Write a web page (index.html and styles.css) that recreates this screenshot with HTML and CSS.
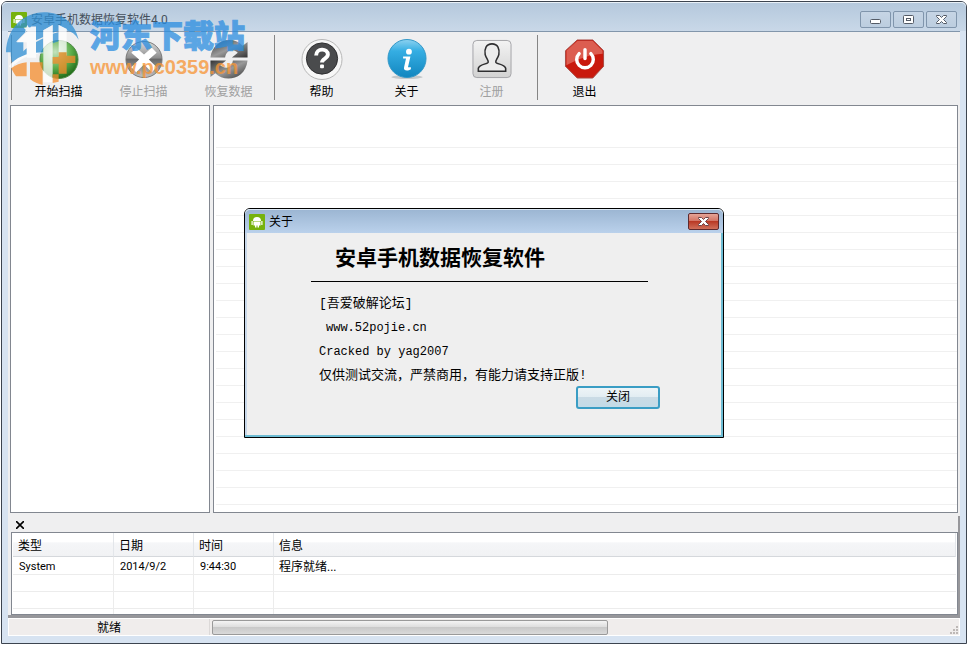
FILE: index.html
```
<!DOCTYPE html>
<html lang="zh-CN">
<head>
    <meta charset="utf-8">
    <title>安卓手机数据恢复软件4.0</title>
    <link rel="stylesheet" href="styles.css">
</head>
<body>
    <div class="window">
        <header class="titlebar">
            <svg class="app-icon" viewBox="0 0 16 16">
                <rect width="16" height="16" rx="1" fill="#76b20d"/>
                <path d="M4 7a4 4 0 0 1 8 0zM4.500 7.500h7v4h-1.500v2h-1.500v-2h-1v2H6v-2H4.500zM2.500 7h1.200v4H2.500zM12.300 7h1.200v4h-1.200z" fill="#fff"/>
            </svg>
            <h1>安卓手机数据恢复软件4.0</h1>
            <div class="window-buttons">
                <button type="button" aria-label="最小化">
                    <svg viewBox="0 0 31 17"><rect x="10.500" y="8.500" width="10" height="4" rx="1" fill="#fff" stroke="#545b66"/></svg>
                </button>
                <button type="button" aria-label="最大化">
                    <svg viewBox="0 0 31 17"><rect x="10.500" y="4.500" width="10" height="8" rx="1" fill="#fff" stroke="#545b66"/><rect x="13.500" y="7.500" width="4" height="2" fill="#fff" stroke="#545b66"/></svg>
                </button>
                <button type="button" aria-label="关闭窗口">
                    <svg viewBox="0 0 31 17"><path d="M10.500 4.500h3l2 2 2-2h3v1l-3 3 3 3v1h-3l-2-2-2 2h-3v-1l3-3-3-3z" fill="#fff" stroke="#545b66"/></svg>
                </button>
            </div>
        </header>

        <div class="client">
            <nav class="toolbar">
                <span class="divider"></span>
                <button type="button" class="tool">
                    <svg viewBox="0 0 42 42">
                        <defs>
                            <radialGradient id="green" cx="40%" cy="30%" r="70%">
                                <stop offset="0" stop-color="#c4e3be"/>
                                <stop offset="0.600" stop-color="#5cae4b"/>
                                <stop offset="1" stop-color="#246f1c"/>
                            </radialGradient>
                        </defs>
                        <circle cx="21" cy="21" r="19.500" fill="url(#green)" stroke="#4f8a47"/>
                    </svg>
                    <span>开始扫描</span>
                </button>
                <button type="button" class="tool" disabled>
                    <svg viewBox="0 0 42 42">
                        <defs>
                            <linearGradient id="gray" x1="0" y1="0" x2="0" y2="1">
                                <stop offset="0" stop-color="#dcdcdc"/>
                                <stop offset="0.450" stop-color="#8e8e8e"/>
                                <stop offset="0.500" stop-color="#686868"/>
                                <stop offset="1" stop-color="#c4c4c4"/>
                            </linearGradient>
                        </defs>
                        <circle cx="21" cy="21" r="18.500" fill="url(#gray)" stroke="#777"/>
                        <path d="M13 9l8 7 8-7 5 5-8 7 8 8-5 5-8-8-8 8-5-5 8-8-8-7z" fill="#fff"/>
                    </svg>
                    <span>停止扫描</span>
                </button>
                <button type="button" class="tool" disabled>
                    <svg viewBox="0 0 42 42">
                        <defs>
                            <linearGradient id="dark" x1="0" y1="0" x2="1" y2="1">
                                <stop offset="0" stop-color="#333"/>
                                <stop offset="0.500" stop-color="#999"/>
                                <stop offset="1" stop-color="#333"/>
                            </linearGradient>
                        </defs>
                        <path d="M2 19C4 0 26-4 35 7l5-4v16H24l6-5c-6-5-12-2-13 5z" fill="url(#dark)"/>
                        <path d="M40 22C38 42 16 45 7 35l-5 4V22h16l-6 5c6 5 12 2 13-5z" fill="url(#dark)"/>
                    </svg>
                    <span>恢复数据</span>
                </button>
                <span class="divider"></span>
                <button type="button" class="tool">
                    <svg viewBox="0 0 42 42">
                        <circle cx="21" cy="21" r="20.500" fill="#f7f7f7" stroke="#b5b5b5"/>
                        <circle cx="21" cy="20" r="16" fill="#4a4b4d" stroke="#2c2c2e"/>
                        <path d="M15 17c0-8 12-8 12-1 0 4-6 4-6 8" fill="none" stroke="#fff" stroke-width="4"/>
                        <rect x="19" y="26" width="4" height="4" rx="1" fill="#fff"/>
                    </svg>
                    <span>帮助</span>
                </button>
                <button type="button" class="tool">
                    <svg viewBox="0 0 42 42">
                        <defs>
                            <linearGradient id="blue" x1="0" y1="0" x2="0" y2="1">
                                <stop offset="0" stop-color="#8ed2f0"/>
                                <stop offset="0.300" stop-color="#35aee3"/>
                                <stop offset="1" stop-color="#1286bf"/>
                            </linearGradient>
                        </defs>
                        <ellipse cx="21" cy="39" rx="16" ry="2" fill="#c4c8ca"/>
                        <circle cx="21" cy="20" r="19.500" fill="url(#blue)" stroke="#3196c6"/>
                        <circle cx="23" cy="13" r="3" fill="#fff"/>
                        <path d="M17 18h7.500l-2.500 11h3v2c-3 2-8 2-7-2l2-9h-3z" fill="#fff"/>
                    </svg>
                    <span>关于</span>
                </button>
                <button type="button" class="tool" disabled>
                    <svg viewBox="0 0 42 42">
                        <defs>
                            <linearGradient id="silver" x1="0" y1="0" x2="0" y2="1">
                                <stop offset="0" stop-color="#f3f3f3"/>
                                <stop offset="1" stop-color="#d2d2d2"/>
                            </linearGradient>
                        </defs>
                        <rect x="1.500" y="1.500" width="39" height="38" rx="4" fill="url(#silver)" stroke="#a3a3a8"/>
                        <path d="M7 33v-3c1-4 8-4 10-6 1-2-2-4-3-8-1-6 1-11 7-11s8 5 7 11c-1 4-4 6-3 8 2 2 9 2 10 6v3z" fill="#ececec" stroke="#2e2e30" stroke-width="1.600"/>
                    </svg>
                    <span>注册</span>
                </button>
                <span class="divider"></span>
                <button type="button" class="tool">
                    <svg viewBox="0 0 42 42">
                        <path d="M13 1h16l11 11v16L29 40H13L1 28V12z" fill="#c9190d" stroke="#a84943"/>
                        <path d="M13 2h16l10 10v3C26 16 14 20 2 27V12z" fill="#dc5d50"/>
                        <path d="M15 15a8.500 8.500 0 1 0 12 0" fill="none" stroke="#fff" stroke-width="3.500" stroke-linecap="round"/>
                        <path d="M21 11v9" stroke="#fff" stroke-width="3.500" stroke-linecap="round"/>
                    </svg>
                    <span>退出</span>
                </button>
            </nav>

            <main class="panels">
                <section class="tree"></section>
                <section class="files"></section>
            </main>

            <section class="log">
                <div class="log-bar">
                    <button type="button" aria-label="隐藏日志">
                        <svg viewBox="0 0 8 8"><path d="M0 0l8 8M8 0L0 8" stroke="#000" stroke-width="1.600"/></svg>
                    </button>
                </div>
                <div class="log-list">
                    <table>
                        <thead>
                            <tr><th class="type">类型</th><th class="date">日期</th><th class="time">时间</th><th>信息</th></tr>
                        </thead>
                        <tbody>
                            <tr><td>System</td><td>2014/9/2</td><td>9:44:30</td><td>程序就绪...</td></tr>
                            <tr><td></td><td></td><td></td><td></td></tr>
                            <tr><td></td><td></td><td></td><td></td></tr>
                            <tr><td></td><td></td><td></td><td></td></tr>
                        </tbody>
                    </table>
                </div>
            </section>

            <footer class="status">
                <span class="status-text">就绪</span>
                <div class="progress" role="progressbar" aria-label="进度"></div>
                <svg class="grip" viewBox="0 0 9 9">
                    <path d="M6 0h2v2H6zM3 3h2v2H3zM6 3h2v2H6zM0 6h2v2H0zM3 6h2v2H3zM6 6h2v2H6z" fill="#bdb8b6"/>
                </svg>
            </footer>
        </div>
    </div>

    <div class="overlay">
        <div class="dialog" role="dialog" aria-labelledby="dialog-title">
            <div class="dialog-title">
                <svg class="app-icon" viewBox="0 0 16 16">
                    <rect width="16" height="16" rx="1" fill="#76b20d"/>
                    <path d="M4 7a4 4 0 0 1 8 0zM4.500 7.500h7v4h-1.500v2h-1.500v-2h-1v2H6v-2H4.500zM2.500 7h1.200v4H2.500zM12.300 7h1.200v4h-1.200z" fill="#fff"/>
                </svg>
                <span id="dialog-title">关于</span>
                <button type="button" class="dialog-x" aria-label="关闭对话框">
                    <svg viewBox="0 0 31 17"><path d="M10.500 4.500h3l2 2 2-2h3v1l-3 3 3 3v1h-3l-2-2-2 2h-3v-1l3-3-3-3z" fill="#fff" stroke="#6d4549"/></svg>
                </button>
            </div>
            <div class="dialog-body">
                <h2>安卓手机数据恢复软件</h2>
                <div class="about">
                    <p>[吾爱破解论坛]</p>
                    <p class="site">www.52pojie.cn</p>
                    <p class="credit">Cracked by yag2007</p>
                    <p>仅供测试交流，严禁商用，有能力请支持正版!</p>
                </div>
                <button type="button" class="close">关闭</button>
            </div>
        </div>
    </div>

    <div class="watermark">
        <svg viewBox="0 0 270 240">
            <!-- globe -->
            <path d="M18 142C20 70 70 22 132 22c52 0 92 30 104 82-10-16-22-25-36-28V72l-24-12v18l-18 5V60l-28 16v20l-22 10V64h-14l-46 46h22v32c-14 14-24 26-28 40-8-12-10-24-10-40z" fill="#2f8fd4"/>
            <path d="M36 178c22-34 54-60 94-78v44c-34 2-66 12-94 34z" fill="#2f8fd4"/>
            <path d="M158 86l18-5v28l-18 6z" fill="#2f8fd4"/>
            <!-- white strokes over it -->
            <path d="M50 112l44-46h14v92H80v-46zM130 76l28-16v172h-28zM176 60l24 12v80h-24z" fill="#fff"/>
            <path d="M82 60l4 7 8 1-6 6 2 8-8-4-7 4 2-8-6-6 8-1z" fill="#fff"/>
            <path d="M26 184c24-30 66-46 112-40-44 2-78 14-104 46z" fill="#fff"/>
            <!-- orange base -->
            <path d="M34 190c12-10 28-16 46-18v42H48c-6-8-10-16-14-24zM90 172h38v68c-14-4-26-8-38-18zM158 156h18v-14h24v10h26v22h-26v32h-24v-30h-18z" fill="#f58d2c"/>
            <path d="M158 208h18v22l-18 4z" fill="#f58d2c"/>
        </svg>
        <div class="watermark-text">
            <strong>河东下载站</strong>
            <span>www.pc0359.cn</span>
        </div>
    </div>
</body>
</html>
```
FILE: styles.css
```
* {
    box-sizing: border-box;
}

body {
    margin: 0;
    background: #fff;
    color: #000;
    font-family: Roboto, "Noto Sans CJK SC", sans-serif;
    font-size: 12px;
    line-height: 16px;
    display: flex;
    min-height: 100vh;
}

h1, h2, p {
    margin: 0;
    font-weight: normal;
}

button {
    font: inherit;
    color: inherit;
    padding: 0;
    border: none;
    background: none;
}

svg {
    display: block;
}

/* main window */
.window {
    flex: 1;
    display: flex;
    flex-direction: column;
    margin: 1px;
    padding: 0 6px 7px;
    border: 1px solid #3c444f;
    border-radius: 6px 6px 0 0;
    background: #d7e3f1;
}

.titlebar {
    display: flex;
    align-items: center;
    gap: 4px;
    height: 29px;
    margin: 0 -6px;
    padding: 6px 9px 0;
    border-radius: 5px 5px 0 0;
    background: linear-gradient(#b4c8dc, #c9d8e8);
    box-shadow: inset 0 1px #e8f0f7;
}

.app-icon {
    width: 16px;
    height: 16px;
}

.titlebar h1 {
    font-size: 12px;
    line-height: 16px;
    color: #45505c;
    flex: 1;
}

.window-buttons {
    display: flex;
    gap: 2px;
}

.window-buttons button {
    width: 31px;
    height: 17px;
    border: 1px solid #8095ac;
    border-radius: 2px;
    background: linear-gradient(#c6d5e5, #bccddf);
}

.window-buttons svg, .dialog-x svg {
    width: 31px;
    height: 17px;
    margin: -1px;
}

.client {
    flex: 1;
    display: flex;
    flex-direction: column;
    border-top: 1px solid #8296ab;
    background: #efeff0;
}

.toolbar {
    display: flex;
    height: 73px;
    padding: 3px 0 5px;
}

.divider {
    width: 1px;
    margin: 0 4px 0 3px;
    background: #858585;
}

.tool {
    width: 85px;
    padding-top: 4px;
    display: flex;
    flex-direction: column;
    align-items: center;
    gap: 4px;
}

.tool svg {
    width: 42px;
    height: 42px;
}

.tool:disabled {
    color: #a0a0a0;
}

/* tree and file list */
.panels {
    flex: 1;
    display: flex;
    gap: 3px;
    padding: 0 2px;
}

.tree {
    width: 200px;
    border: 1px solid #828790;
    background: #fff;
}

.files {
    flex: 1;
    border: 1px solid #828790;
    background: repeating-linear-gradient(#fff 0 16px, #f0f0f0 16px 17px) 2px 25px no-repeat #fff;
}

/* log */
.log {
    margin-top: 3px;
    border-right: 2px solid #97979b;
    border-bottom: 3px solid #97979b;
}

.log-bar {
    display: flex;
    height: 16px;
    padding: 5px 8px;
}

.log-bar svg {
    width: 8px;
    height: 8px;
}

.log-list {
    height: 83px;
    margin-left: 3px;
    padding: 0 1px;
    border: 1px solid #828790;
    background: #fff;
    overflow: hidden;
}

.log table {
    width: 100%;
    table-layout: fixed;
    border-collapse: separate;
    border-spacing: 0;
}

.log th, .log td {
    padding: 2px 0 0 5px;
    text-align: left;
    font-weight: normal;
}

.log th {
    height: 24px;
    border-right: 1px solid #e3e6ea;
    border-bottom: 1px solid #d5d8dc;
    background: linear-gradient(#fff 40%, #f5f6f8 42%, #f1f2f4);
}

.log td {
    height: 17px;
    padding-left: 6px;
    border-right: 1px solid #ececec;
    border-bottom: 1px solid #ececec;
    font-size: 11px;
    line-height: 14px;
}

.log tbody tr:first-child td {
    height: 18px;
    padding-top: 3px;
}

.log td:last-child {
    padding-left: 5px;
    border-right: none;
    font-size: 12px;
}

.log .type {
    width: 101px;
}

.log .date, .log .time {
    width: 80px;
}

/* status bar */
.status {
    display: flex;
    align-items: center;
    gap: 2px;
    height: 18px;
    border: 1px solid #fff;
    background: #f0edec;
}

.status-text {
    width: 201px;
    padding-top: 2px;
    border-right: 1px solid #dcd9d8;
    line-height: 14px;
    text-align: center;
}

.progress {
    width: 396px;
    height: 15px;
    border: 1px solid #9a9a9a;
    border-radius: 2px;
    background: linear-gradient(#f4f4f4, #dedede 45%, #c9c9c9 50%, #d9d9d9);
}

.grip {
    width: 9px;
    height: 9px;
    margin: 6px 0 0 auto;
}

/* about dialog */
.overlay {
    position: absolute;
    inset: 0;
    display: flex;
    align-items: center;
    justify-content: center;
}

.dialog {
    width: 480px;
    border: 1px solid #000;
    border-radius: 6px 6px 0 0;
    background: #efefef;
    box-shadow: inset -2px -2px #6dbcd3, inset 2px 0 #c8d8ea;
}

.dialog-title {
    display: flex;
    align-items: center;
    gap: 4px;
    height: 24px;
    padding: 2px 4px 0;
    border-radius: 5px 5px 0 0;
    background: linear-gradient(#9bb5d2, #bad1eb);
    box-shadow: inset 0 1px #dce8f4;
}

.dialog-x {
    width: 31px;
    height: 17px;
    margin-left: auto;
    border: 1px solid #5e2a2e;
    border-radius: 2px;
    background: linear-gradient(#e5a497, #d27363 48%, #b93925 50%, #d0705a);
}

.dialog-body {
    height: 204px;
    padding: 11px 63px 0 66px;
    display: flex;
    flex-direction: column;
}

.dialog-body h2 {
    width: 337px;
    padding: 0 0 9px 24px;
    border-bottom: 1px solid #000;
    font-size: 21px;
    line-height: 28px;
    font-weight: bold;
}

.about {
    padding: 10px 0 0 8px;
    font-family: "Liberation Mono", "Noto Sans CJK SC", monospace;
    font-size: 13px;
    line-height: 24px;
}

.about .site, .about .credit {
    font-size: 12px;
}

.about .site {
    padding-left: 7px;
}

.close {
    align-self: flex-end;
    width: 84px;
    height: 23px;
    margin-top: -2px;
    border: 2px solid #3a9dc4;
    border-radius: 3px;
    background: linear-gradient(#eef4f7, #e2edf2 48%, #cadbe5 50%, #c3dbe7);
}

/* site watermark */
.watermark {
    position: absolute;
    top: 5px;
    left: 0;
    display: flex;
    opacity: 0.75;
    pointer-events: none;
}

.watermark svg {
    width: 90px;
    height: 80px;
}

.watermark-text {
    display: flex;
    flex-direction: column;
    padding-top: 14px;
}

.watermark strong {
    color: #2a8de0;
    font-size: 31px;
    line-height: 36px;
    font-weight: 900;
    -webkit-text-stroke: 1px #2a8de0;
}

.watermark span {
    color: #f79433;
    font-family: "Liberation Sans", sans-serif;
    font-size: 20px;
    line-height: 24px;
    font-weight: bold;
}
```
